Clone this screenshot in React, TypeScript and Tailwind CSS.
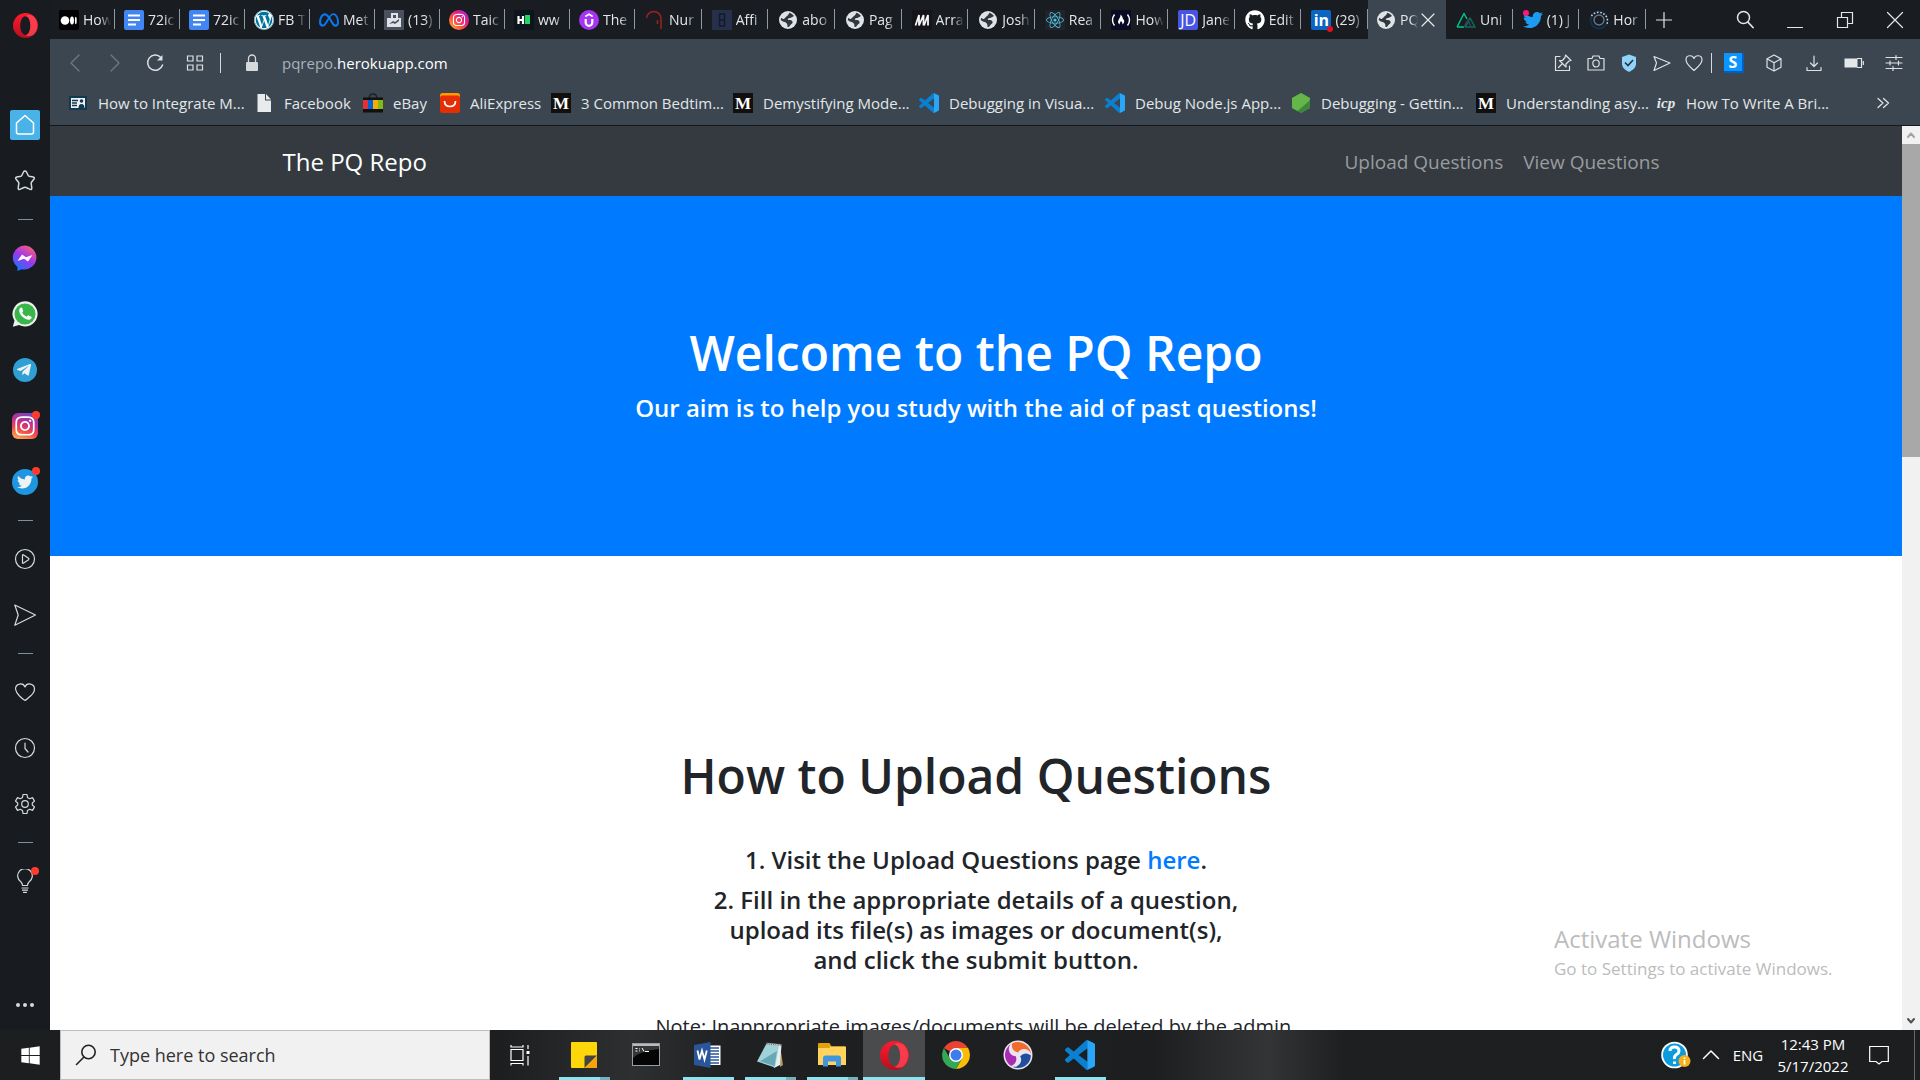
import React from "react";
import type { ReactNode } from "react";
import { FaWordpress, FaInstagram, FaGithub, FaTwitter, FaReact, FaWindows, FaTelegramPlane } from "react-icons/fa";
import { SiMeta } from "react-icons/si";

type SvgProps = { className?: string; box?: string; children: ReactNode };

function Line({ className = "size-5", box = "0 0 20 20", children }: SvgProps) {
  return (
    <svg
      className={className}
      viewBox={box}
      fill="none"
      stroke="currentColor"
      strokeWidth={1.2}
      strokeLinecap="round"
      strokeLinejoin="round"
      aria-hidden="true"
    >
      {children}
    </svg>
  );
}

function OperaO({ className, id }: { className: string; id: string }) {
  return (
    <svg className={className} viewBox="0 0 28 28" aria-hidden="true">
      <defs>
        <linearGradient id={id} x1="0" y1="0" x2="0" y2="1">
          <stop offset="0" stopColor="#ff1b2d" />
          <stop offset="1" stopColor="#b80f20" />
        </linearGradient>
      </defs>
      <path
        fillRule="evenodd"
        fill={`url(#${id})`}
        d="M14 0a14 14 0 1 0 0 28a14 14 0 1 0 0-28ZM14 3.500c3.300 0 5.400 4.600 5.400 10.500s-2.100 10.500-5.400 10.500s-5.900-4.600-5.900-10.500s2.600-10.500 5.900-10.500Z"
      />
      <path
        fill="#ff4a58"
        opacity="0.75"
        d="M14 3.500c2-1.600 5-2 8.800.2a14 14 0 0 1 0 20.600c-3.800 2.200-6.800 1.800-8.800.2c3.300 0 5.400-4.600 5.400-10.500s-2.100-10.500-5.400-10.500Z"
      />
    </svg>
  );
}

function VsCode({ className = "size-5" }: { className?: string }) {
  return (
    <svg className={className} viewBox="0 0 24 24" aria-hidden="true">
      <path
        fill="#0b7fd0"
        d="M23.150 2.587L18.210.210a1.494 1.494 0 0 0-1.705.290l-9.460 8.630-4.120-3.128a.999.999 0 0 0-1.276.057L.327 7.261A1 1 0 0 0 .326 8.740L3.899 12 .326 15.260a1 1 0 0 0 .001 1.479L1.650 17.940a.999.999 0 0 0 1.276.057l4.120-3.128 9.460 8.630a1.492 1.492 0 0 0 1.704.290l4.942-2.377A1.500 1.500 0 0 0 24 20.060V3.939a1.500 1.500 0 0 0-.850-1.352zm-5.146 14.861L10.826 12l7.178-5.448v10.896z"
      />
      <path fill="#2ba5f7" d="M18.004.150L23.150 2.587A1.500 1.500 0 0 1 24 3.939V20.060a1.500 1.500 0 0 1-.850 1.360L18.004 23.850Z" />
    </svg>
  );
}

function Tile({ className, children }: { className: string; children?: ReactNode }) {
  return (
    <span className={`flex size-5 shrink-0 items-center justify-center overflow-hidden leading-none ${className}`}>
      {children}
    </span>
  );
}

const docsIcon = (
  <Tile className="rounded-xs bg-[#4285f4]">
    <svg viewBox="0 0 20 20" className="size-5" fill="#fff" aria-hidden="true">
      <path d="M4 4.500h12v2H4zM4 9h12v2H4zM4 13.500h8v2H4z" />
    </svg>
  </Tile>
);

const globeIcon = (
  <svg viewBox="0 0 20 20" className="size-5 shrink-0" aria-hidden="true">
    <circle cx="10" cy="10" r="9" fill="#dfe3e6" />
    <path
      fill="#30373e"
      d="M11.500 2.700C13 3.200 15 4.300 16 6c-.800.200-1.200 1-2 1.200c-1-.200-1.200.800-2.200.800c-1 .500-2 .200-2 1.200c0 .800 1 .800 2.200.900c1.500.200 2.800.900 2.600 2.300c-.300 1.600-2 1.600-2.600 3c-.500 1-1.300 1.500-2.500 1.600c-.300-1.500.200-2.600-.700-3.600c-1-.900-1.800-1.500-3-1.700C4.600 11.500 3.600 10.800 2.800 10c0-.800.100-1.500.400-2.100c1 .300 1.800 1.200 2.900 1c.300-1.200 1.600-1.300 2.200-2.200c.300-1.200 1.700-.900 2-2c.200-.800.800-1.200 1.200-2Z"
    />
  </svg>
);

const mediumIcon = (
  <Tile className="bg-[#12100e] font-['Liberation_Serif',serif] text-[17px] font-bold text-white">M</Tile>
);

const instagramTile = (
  <Tile className="rounded-full bg-[linear-gradient(45deg,#ffc531,#ff543f_35%,#e01d8c_65%,#8a3bee)]">
    <FaInstagram className="size-3.5 text-white" />
  </Tile>
);

type TabInfo = { title: string; icon: ReactNode; wide?: boolean; active?: boolean };

const tabs: TabInfo[] = [
  {
    title: "How",
    icon: (
      <Tile className="rounded-xs bg-black">
        <svg viewBox="0 0 20 20" className="size-5" fill="#fff" aria-hidden="true">
          <circle cx="6" cy="10.500" r="4.300" />
          <ellipse cx="13" cy="10.500" rx="2" ry="4" />
          <ellipse cx="16.800" cy="10.500" rx="0.900" ry="3.700" />
        </svg>
      </Tile>
    ),
  },
  { title: "72ic", icon: docsIcon },
  { title: "72ic", icon: docsIcon },
  {
    title: "FB T",
    icon: (
      <Tile className="rounded-full bg-white">
        <FaWordpress className="size-5 text-[#00749c]" />
      </Tile>
    ),
  },
  { title: "Met", icon: <SiMeta className="size-5 shrink-0 text-[#0a78f0]" /> },
  {
    title: "(13)",
    icon: (
      <Tile className="bg-[#4a505e]">
        <svg viewBox="0 0 20 20" className="size-5" aria-hidden="true">
          <path fill="#dfe2e8" d="M7 3h7v5h3v9H3V8h4z" />
          <path fill="#4a505e" d="M9 5h3v3H9zM5 14l4-3 2 1 4-3v2l-4 3-2-1-4 1z" />
        </svg>
      </Tile>
    ),
  },
  { title: "Taic", icon: instagramTile },
  {
    title: "ww",
    icon: (
      <Tile className="bg-[#0e141e]">
        <svg viewBox="0 0 20 20" className="size-5" aria-hidden="true">
          <path d="M4.500 6v8M9 6v8M4.500 10H9" stroke="#fff" strokeWidth="2.200" />
          <path fill="#1fd760" d="M11 5h5v9h-5z" />
        </svg>
      </Tile>
    ),
  },
  {
    title: "The",
    icon: (
      <Tile className="rounded-full bg-[#a435f0]">
        <svg viewBox="0 0 20 20" className="size-5" fill="none" stroke="#fff" aria-hidden="true">
          <path strokeWidth="2.200" d="M6.700 9v3.500a3.300 3.300 0 0 0 6.600 0V9" />
          <path strokeWidth="1.600" d="M6.300 6.500L10 4.300l3.700 2.200" />
        </svg>
      </Tile>
    ),
  },
  {
    title: "Nur",
    wide: true,
    icon: (
      <svg viewBox="0 0 20 20" className="size-5 shrink-0" fill="none" stroke="#a32020" strokeWidth="1.500" aria-hidden="true">
        <path d="M1.500 8A7.300 7.300 0 0 1 16 8v11M12.500 10v4" />
      </svg>
    ),
  },
  {
    title: "Affi",
    wide: true,
    icon: (
      <Tile className="bg-[#26304a]">
        <svg viewBox="0 0 20 20" className="size-5" fill="none" stroke="#121a2c" strokeWidth="1.500" aria-hidden="true">
          <path d="M7.500 4h5v12h-5zM8 10h4" />
        </svg>
      </Tile>
    ),
  },
  { title: "abo", wide: true, icon: globeIcon },
  { title: "Pag", wide: true, icon: globeIcon },
  {
    title: "Arra",
    wide: true,
    icon: (
      <Tile className="bg-[#15141a]">
        <svg viewBox="0 0 20 20" className="size-5" fill="none" stroke="#f5f5f5" strokeWidth="1.800" aria-hidden="true">
          <path d="M3.500 15.500L7 5v10.500L11.500 5v10.500M12 15.500L16 5v10.500" />
        </svg>
      </Tile>
    ),
  },
  { title: "Josh", wide: true, icon: globeIcon },
  {
    title: "Rea",
    wide: true,
    icon: (
      <Tile className="bg-[#20232a]">
        <FaReact className="size-[18px] text-[#53c1de]" />
      </Tile>
    ),
  },
  {
    title: "How",
    wide: true,
    icon: (
      <Tile className="bg-[#0a0a23]">
        <svg viewBox="0 0 20 20" className="size-5" fill="none" stroke="#fff" strokeWidth="1.400" aria-hidden="true">
          <path d="M3.500 4.500q-4 5.500 0 11M16.500 4.500q4 5.500 0 11" />
          <path fill="#fff" stroke="none" d="M9.500 4.500c3 2.500 1.500 4 3.500 5.500c.700 2-.300 4-1.800 4.500c.800-1.500-.500-2.500-1.200-3.500c-.500 1.200-1.700 2-1.200 3.500c-2-1-2.300-3-1-5c1-1.500 1.700-3 1.700-5Z" />
        </svg>
      </Tile>
    ),
  },
  { title: "Jane", wide: true, icon: <Tile className="rounded-xs bg-[#4755e0] text-[16px] text-white">JD</Tile> },
  { title: "Edit", wide: true, icon: <FaGithub className="size-5 shrink-0 text-white" /> },
  {
    title: "(29)",
    wide: true,
    icon: (
      <span className="relative shrink-0">
        <Tile className="rounded-xs bg-[#0a66c2] text-[16px] font-bold text-white">in</Tile>
        <span className="absolute -right-0.5 -bottom-0.5 size-1.5 rounded-full bg-[#e0101c]" />
      </span>
    ),
  },
  { title: "PQ", active: true, icon: globeIcon },
  {
    title: "Uni",
    wide: true,
    icon: (
      <svg viewBox="0 0 20 20" className="size-5 shrink-0" fill="none" strokeWidth="1.500" strokeLinejoin="round" aria-hidden="true">
        <path stroke="#0e6f55" d="M9.500 17L14 8l5 9z" />
        <path stroke="#00c58e" d="M1 17L8 3.500l3 5.500M1 17h7" />
        <path stroke="#2f495e" d="M8 17l4-7 3 7" />
      </svg>
    ),
  },
  {
    title: "(1) J",
    wide: true,
    icon: (
      <span className="relative shrink-0">
        <FaTwitter className="size-5 text-[#1d9bf0]" />
        <span className="absolute top-0 left-0 size-1.5 rounded-full bg-[#f91880]" />
      </span>
    ),
  },
  {
    title: "Hor",
    wide: true,
    icon: (
      <svg viewBox="0 0 20 20" className="size-5 shrink-0" fill="none" aria-hidden="true">
        <circle cx="10" cy="10" r="8.500" stroke="#123150" strokeWidth="2" />
        <path d="M2.500 6A8.800 8.800 0 0 1 18 14" stroke="#d5dae0" strokeWidth="1.500" strokeDasharray="1.500 1.800" />
        <circle cx="10" cy="10" r="5" stroke="#65758a" strokeWidth="1.400" />
      </svg>
    ),
  },
];

function Tab({ tab }: { tab: TabInfo }) {
  const shape = tab.active
    ? "w-[78px] shrink-0 bg-[#3b4651] pl-2 pr-2"
    : tab.wide
      ? "min-w-0 flex-1 pl-2.5 pr-1"
      : "w-[65px] shrink-0 pl-[9px] pr-1";
  return (
    <div className={`relative flex items-center ${shape}`}>
      <button type="button" className="flex min-w-0 flex-1 items-center gap-1 text-left">
        {tab.icon}
        <span className="min-w-0 flex-1 overflow-hidden mask-r-from-60% text-[14px] whitespace-nowrap text-[#e4e6e8]">
          {tab.title}
        </span>
      </button>
      {tab.active ? (
        <button type="button" aria-label="Close tab" className="text-[#e5e8ea]">
          <Line className="size-5">
            <path d="M4 4l12 12M16 4L4 16" />
          </Line>
        </button>
      ) : (
        <span className="absolute top-[9px] right-0 h-5 w-px bg-[#8f9aa5]" />
      )}
    </div>
  );
}

function WindowButton({ label, children }: { label: string; children: ReactNode }) {
  return (
    <button type="button" aria-label={label} className="flex w-[50px] items-center justify-center text-[#e4e7e9]">
      {children}
    </button>
  );
}

function TabStrip() {
  return (
    <div className="flex h-[39px] shrink-0 bg-[#191c20]">
      <div className="flex min-w-0 flex-1">
        {tabs.map((tab, i) => (
          <Tab key={i} tab={tab} />
        ))}
      </div>
      <div className="flex shrink-0">
        <button type="button" aria-label="New tab" className="mr-[38px] flex w-9 items-center justify-center text-[#e4e7e9]">
          <Line>
            <path d="M10 2.500v15M2.500 10h15" />
          </Line>
        </button>
        <WindowButton label="Search tabs">
          <Line>
            <circle cx="8.500" cy="7.500" r="6" strokeWidth={1.500} />
            <path d="M12.800 12l5.200 5.500" strokeWidth={1.800} />
          </Line>
        </WindowButton>
        <WindowButton label="Minimize">
          <Line>
            <path d="M2.500 17.500h15" />
          </Line>
        </WindowButton>
        <WindowButton label="Restore">
          <Line>
            <path d="M2.500 7.500h10v10h-10zM6.500 7V2.500h11v11H13" strokeLinejoin="miter" />
          </Line>
        </WindowButton>
        <WindowButton label="Close">
          <Line>
            <path d="M2.500 2.500l15 15M17.500 2.500l-15 15" />
          </Line>
        </WindowButton>
      </div>
    </div>
  );
}

function ToolButton({ label, className, children }: { label: string; className: string; children: ReactNode }) {
  return (
    <button type="button" aria-label={label} className={`flex items-center justify-center ${className}`}>
      {children}
    </button>
  );
}

function AddressBar() {
  return (
    <div className="flex h-[46px] shrink-0 items-center pt-0.5 pl-[5px] text-[#dde1e4]">
      <ToolButton label="Back" className="w-10 text-[#6f7a84]">
        <Line>
          <path d="M14 2l-8 8 8 8" />
        </Line>
      </ToolButton>
      <ToolButton label="Forward" className="w-10 text-[#6f7a84]">
        <Line>
          <path d="M6 2l8 8-8 8" />
        </Line>
      </ToolButton>
      <ToolButton label="Reload" className="w-10">
        <Line>
          <path d="M15.800 4.500A7.600 7.600 0 1 0 17.500 12" strokeWidth={1.500} />
          <path d="M17.500 2v5.500H12z" fill="currentColor" stroke="none" />
        </Line>
      </ToolButton>
      <ToolButton label="Speed dials" className="w-10">
        <Line>
          <path d="M2.500 3h5.500v5H2.500zM12 3h5.500v5H12zM2.500 12h5.500v5H2.500zM12 12h5.500v5H12z" strokeLinejoin="miter" />
        </Line>
      </ToolButton>
      <span className="ml-[5px] h-5 w-px bg-[#d5d9dc]" />
      <ToolButton label="Site information" className="w-[61px]">
        <svg viewBox="0 0 20 20" className="size-5" aria-hidden="true">
          <rect x="4" y="9" width="12" height="9" rx="1" fill="#d5d9dc" />
          <path d="M6.500 9V5.500a3.500 3.500 0 0 1 7 0V9" fill="none" stroke="#d5d9dc" strokeWidth="1.300" />
        </svg>
      </ToolButton>
      <button type="button" className="flex-1 cursor-text text-left text-[15px] text-[#a9b2ba]">
        pqrepo.<span className="text-white">herokuapp.com</span>
      </button>
      <div className="flex shrink-0 items-center">
        <ToolButton label="Edit page" className="w-[33px]">
          <Line>
            <path d="M7 3.500H2.500v14h14V13M12.500 2l5.500 5.500-2 .5-3 3v3L6.500 7.500h3l2.500-3zM9.500 10.500L5.500 14.500" />
          </Line>
        </ToolButton>
        <ToolButton label="Snapshot" className="w-[33px]">
          <Line>
            <path d="M2 5.500h4l1-2.500h6l1 2.500h4v11.500H2z" />
            <ellipse cx="10" cy="10.500" rx="3.200" ry="3.500" />
          </Line>
        </ToolButton>
        <ToolButton label="Privacy protection" className="w-[33px]">
          <svg viewBox="0 0 20 20" className="size-5" aria-hidden="true">
            <path d="M10 1.500l7 2.500v7c0 3.500-3.500 6.500-7 8-3.500-1.500-7-4.500-7-8V4z" fill="#8fd3fb" />
            <path d="M6 9.500l3 3 5-5.500" fill="none" stroke="#26323c" strokeWidth="1.600" />
          </svg>
        </ToolButton>
        <ToolButton label="Send to My Flow" className="w-[33px]">
          <Line>
            <path d="M2 3.500L18 10 2 17.500 4.500 10z" />
          </Line>
        </ToolButton>
        <ToolButton label="Add to bookmarks" className="w-[31px]">
          <Line>
            <path d="M10 17.500C6 14 2 11 2 6.800C2 1.800 8.500 1.500 10 5.500C11.500 1.500 18 1.800 18 6.800C18 11 14 14 10 17.500z" />
          </Line>
        </ToolButton>
        <span className="mx-[2px] h-5 w-px bg-[#d5d9dc]" />
        <ToolButton label="Extension" className="w-10">
          <span className="flex size-5 items-center justify-center border-r-2 border-b-2 border-[#005fc0] bg-[#0b95ff] text-[16px] leading-none font-bold text-white">
            S
          </span>
        </ToolButton>
        <ToolButton label="Extensions" className="w-10">
          <Line>
            <path d="M10 2l7 3.800v8.400L10 18l-7-3.800V5.800zM3 5.800l7 4 7-4M10 9.800V18" />
          </Line>
        </ToolButton>
        <ToolButton label="Downloads" className="w-10">
          <Line>
            <path d="M10 3v10M6.500 10l3.500 3.500 3.500-3.500M3 14.500v3h14v-3" />
          </Line>
        </ToolButton>
        <ToolButton label="Battery saver" className="w-10">
          <svg viewBox="0 0 20 20" className="size-5" aria-hidden="true">
            <path d="M.5 5.500h13v9H.5z" fill="#e4e8ea" />
            <path d="M13 5.500h4.500v9H13M19.300 8v4" fill="none" stroke="#e4e8ea" strokeWidth="1.200" />
          </svg>
        </ToolButton>
        <ToolButton label="Easy setup" className="mr-1.5 w-10">
          <Line>
            <path d="M2 4.500h16M2 10h16M2 15.500h16M12 2.500v4M6 8v4M14.500 8v4M9 13.500v4" />
          </Line>
        </ToolButton>
      </div>
    </div>
  );
}

type Bookmark = { label: string; icon: ReactNode; width: string };

const bookmarks: Bookmark[] = [
  {
    label: "How to Integrate M...",
    width: "w-[186px]",
    icon: (
      <svg viewBox="0 0 20 20" className="size-5 shrink-0" aria-hidden="true">
        <rect x="1" y="3" width="18" height="14" fill="#12394f" />
        <path fill="#eef2f4" d="M3 5h14v10H3z" />
        <path d="M4 7.500h6M4 10h5M4 12.500h5" stroke="#12394f" strokeWidth="1.300" />
        <circle cx="13.500" cy="8" r="1.800" fill="#12394f" />
        <path fill="#12394f" d="M10.500 15q0-4 3-4t3 4z" />
      </svg>
    ),
  },
  {
    label: "Facebook",
    width: "w-[109px]",
    icon: (
      <svg viewBox="0 0 20 20" className="size-5 shrink-0" aria-hidden="true">
        <path fill="#e8ebed" d="M3.500 1h7.500v6.500h6V19H3.500z" />
        <path fill="#e8ebed" d="M12 1l5 5.500h-5z" />
      </svg>
    ),
  },
  {
    label: "eBay",
    width: "w-[77px]",
    icon: (
      <svg viewBox="0 0 20 20" className="size-5 shrink-0" aria-hidden="true">
        <path d="M6 6q0-5 4-5t4 5" fill="none" stroke="#1b2025" strokeWidth="1.300" />
        <path fill="#111" d="M0 4.500h20V7H0zM0 16h20v3.500H0z" />
        <path fill="#e43137" d="M0 7h5v9H0z" />
        <path fill="#0064d2" d="M5 7h5v9H5z" />
        <path fill="#f5af02" d="M10 7h5v9h-5z" />
        <path fill="#86b817" d="M15 7h5v9h-5z" />
      </svg>
    ),
  },
  {
    label: "AliExpress",
    width: "w-[111px]",
    icon: (
      <svg viewBox="0 0 20 20" className="size-5 shrink-0" aria-hidden="true">
        <rect width="20" height="12" rx="2.500" fill="#ff9a00" />
        <rect y="2.500" width="20" height="17.500" rx="2.500" fill="#e62e04" />
        <path d="M4.500 8q0 5.500 5.500 5.500T15.500 8" fill="none" stroke="#fff" strokeWidth="1.700" />
      </svg>
    ),
  },
  { label: "3 Common Bedtim...", width: "w-[182px]", icon: mediumIcon },
  { label: "Demystifying Mode...", width: "w-[186px]", icon: mediumIcon },
  { label: "Debugging in Visua...", width: "w-[186px]", icon: <VsCode className="size-5 shrink-0" /> },
  { label: "Debug Node.js App...", width: "w-[186px]", icon: <VsCode className="size-5 shrink-0" /> },
  {
    label: "Debugging - Gettin...",
    width: "w-[185px]",
    icon: (
      <svg viewBox="0 0 20 20" className="size-5 shrink-0" aria-hidden="true">
        <path fill="#539e43" d="M10 0l9 5v10l-9 5-9-5V5z" />
        <path fill="#6cc04a" d="M10 0l9 5v3L6 17.800 1 15V5z" opacity="0.700" />
        <path fill="#3e863d" d="M19 7v8l-9 5-3-1.700z" />
      </svg>
    ),
  },
  { label: "Understanding asy...", width: "w-[180px]", icon: mediumIcon },
  {
    label: "How To Write A Bri...",
    width: "w-[186px]",
    icon: (
      <span className="w-5 shrink-0 text-center font-['Liberation_Serif',serif] text-[15px] font-bold italic">icp</span>
    ),
  },
];

function BookmarksBar() {
  return (
    <nav aria-label="Bookmarks" className="flex h-10 shrink-0 items-center pb-1 pl-[18px] text-[#e3e6e8]">
      {bookmarks.map((b) => (
        <a key={b.label} href="#" className={`flex shrink-0 items-center gap-2.5 text-[15px] whitespace-nowrap ${b.width}`}>
          {b.icon}
          {b.label}
        </a>
      ))}
      <button type="button" aria-label="More bookmarks" className="mr-[27px] ml-auto">
        <Line>
          <path d="M5 5.500l5 4.500-5 4.500M10.500 5.500l5 4.500-5 4.500" />
        </Line>
      </button>
    </nav>
  );
}

function Dash() {
  return (
    <div className="flex h-[21px] shrink-0 items-center justify-center">
      <span className="h-px w-[15px] bg-[#7f8f9b]" />
    </div>
  );
}

function SideButton({ label, dot, children }: { label: string; dot?: boolean; children: ReactNode }) {
  return (
    <button type="button" aria-label={label} className="flex h-14 w-full shrink-0 items-center justify-center text-[#d5dadd]">
      <span className="relative">
        {children}
        {dot && <span className="absolute -top-0.5 -right-0.5 size-2 rounded-full bg-[#ff3b30]" />}
      </span>
    </button>
  );
}

function Sidebar() {
  return (
    <aside className="flex w-[50px] shrink-0 flex-col bg-[#181c20]">
      <button type="button" aria-label="Opera menu" className="flex h-[97px] shrink-0 justify-center pt-[13px]">
        <OperaO className="size-[25px]" id="opera-menu" />
      </button>
      <SideButton label="Speed Dial">
        <span className="flex size-[30px] items-center justify-center rounded-xs bg-[#48b2e9] text-white">
          <Line className="size-6" box="0 0 24 24">
            <path d="M12 2.500l8.500 7.500v9q0 2-2 2h-13q-2 0-2-2v-9z" strokeWidth={1.500} />
          </Line>
        </span>
      </SideButton>
      <SideButton label="Pinboards">
        <Line className="size-6" box="0 0 24 24">
          <path
            d="M12 2q1 0 1.500 1l1.700 3.500q.3.600 1 .8l4 .7q1.800.500.800 2l-2.500 3.200q-.4.500-.300 1.200l.600 4.800q0 1.700-1.600 1.200L13 18.500q-1-.4-2 0l-4.200 1.900q-1.600.500-1.600-1.200l.6-4.800q.1-.7-.3-1.200L3 10q-1-1.500.8-2l4-.7q.7-.2 1-.8L10.500 3q.5-1 1.500-1z"
            strokeWidth={1.500}
          />
        </Line>
      </SideButton>
      <Dash />
      <SideButton label="Messenger">
        <svg viewBox="0 0 26 26" className="size-[26px]" aria-hidden="true">
          <defs>
            <linearGradient id="messenger" x1="0.200" y1="1" x2="0.800" y2="0">
              <stop offset="0" stopColor="#0a7cff" />
              <stop offset="0.500" stopColor="#9b36f0" />
              <stop offset="1" stopColor="#ff6070" />
            </linearGradient>
          </defs>
          <path fill="url(#messenger)" d="M13 .5a12.300 12 0 1 1-3.500 23.700L5.500 26v-4A12 12 0 0 1 13 .5z" />
          <path fill="#fff" d="M5.500 16l4.500-6.500 4 2.800L20.500 10 16 16.500l-4-2.800z" />
        </svg>
      </SideButton>
      <SideButton label="WhatsApp">
        <svg viewBox="0 0 26 26" className="size-[26px]" aria-hidden="true">
          <path fill="#eef0ef" d="M13 .3a12.600 12.600 0 1 1-6 23.700L.8 25.700l1.700-6A12.600 12.600 0 0 1 13 .3z" />
          <circle cx="13" cy="13" r="10.500" fill="#38b64a" />
          <path fill="#fff" d="M9 6.500c-3 1.500-2 6 1.500 9.300s7.800 4 9 1.200c.3-.8 0-1.300-.5-1.500l-2.300-1.100c-.5-.2-.9 0-1.200.4l-.8 1q-3-1-4.500-4l.8-1c.2-.4.300-.7.100-1.100L10.200 7q-.4-.8-1.200-.5z" />
        </svg>
      </SideButton>
      <SideButton label="Telegram">
        <span className="flex size-6 items-center justify-center rounded-full bg-[#2f9fd4]">
          <FaTelegramPlane className="mr-0.5 size-4 text-[#eef3f6]" />
        </span>
      </SideButton>
      <SideButton label="Instagram" dot>
        <span className="flex size-[26px] items-center justify-center rounded-md bg-[linear-gradient(20deg,#fdc04f,#ee4b4b_35%,#c0308f_60%,#5b4cd0)]">
          <FaInstagram className="size-[22px] text-white" />
        </span>
      </SideButton>
      <SideButton label="Twitter" dot>
        <span className="flex size-[26px] items-center justify-center rounded-full bg-[#1e96e0]">
          <FaTwitter className="size-4 text-[#eef3f6]" />
        </span>
      </SideButton>
      <Dash />
      <SideButton label="Player">
        <Line className="size-[22px]" box="0 0 22 22">
          <circle cx="11" cy="11" r="9.500" />
          <path d="M8.500 7.300q0-.8.800-.5l5.200 3.500q.8.700 0 1.400l-5.200 3.500q-.8.300-.8-.5z" />
        </Line>
      </SideButton>
      <SideButton label="My Flow">
        <Line className="size-[22px]" box="0 0 22 22">
          <path d="M.8 1L21.500 11 .8 21.200l3.400-10.200z" />
        </Line>
      </SideButton>
      <Dash />
      <SideButton label="Bookmarks">
        <Line className="size-[22px]" box="0 0 22 22">
          <path d="M11 19.500q-2-1-5.500-4.500T1.500 8C1.500 2.500 9 1 11 6c2-5 9.500-3.500 9.500 2q0 3.500-4 7T11 19.500z" />
        </Line>
      </SideButton>
      <SideButton label="History">
        <Line className="size-[22px]" box="0 0 22 22">
          <circle cx="11" cy="11" r="9.500" />
          <path d="M11 6v5.500l3 3.500" />
        </Line>
      </SideButton>
      <SideButton label="Settings">
        <Line className="size-[22px]" box="0 0 22 22">
          <path d="M9 1.500h4l.5 3 2.200 1.200 2.800-1.100 2 3.500-2.200 1.900v2l2.200 1.900-2 3.500-2.800-1.100-2.200 1.200-.5 3H9l-.5-3-2.200-1.200-2.800 1.100-2-3.500 2.200-1.900v-2L1.500 8.100l2-3.500 2.800 1.100 2.200-1.200z" />
          <circle cx="11" cy="11" r="3.300" />
        </Line>
      </SideButton>
      <Dash />
      <SideButton label="Tips" dot>
        <Line className="size-6" box="0 0 24 24">
          <path d="M9.500 16.500q0-2-1.500-3.500a7.300 7.300 0 1 1 8 0q-1.500 1.500-1.500 3.500zM9 19h6M9.500 21.200h5M10.500 23.300h3" />
        </Line>
      </SideButton>
      <button type="button" aria-label="Sidebar setup" className="mt-auto flex h-[50px] items-center justify-center gap-[3px]">
        <span className="size-1 rounded-full bg-[#d5dadd]" />
        <span className="size-1 rounded-full bg-[#d5dadd]" />
        <span className="size-1 rounded-full bg-[#d5dadd]" />
      </button>
    </aside>
  );
}

function WebPage() {
  return (
    <div className="relative flex min-h-0 flex-1 border-t border-[#15181b] bg-white text-[#212529]">
      <div className="min-w-0 flex-1 overflow-hidden">
        <header className="h-[70px] bg-[#343a40] pt-0.5">
          <div className="mx-auto flex h-full max-w-[1425px] items-center justify-between px-[19px]">
            <a href="#" className="text-[24px] text-white">
              The PQ Repo
            </a>
            <nav aria-label="Site" className="flex text-[19px] text-[#999c9f]">
              <a href="#" className="px-2.5">
                Upload Questions
              </a>
              <a href="#" className="px-2.5">
                View Questions
              </a>
            </nav>
          </div>
        </header>
        <section className="bg-[#007bff] pt-[127px] pb-[123px] text-center font-semibold text-white">
          <h1 className="mb-2.5 text-[48px] leading-[60px]">Welcome to the PQ Repo</h1>
          <h2 className="mb-2.5 text-[24px] leading-[30px]">Our aim is to help you study with the aid of past questions!</h2>
        </section>
        <section className="pt-[190px] text-center">
          <h2 className="mb-[39px] text-[48px] leading-[60px] font-semibold">How to Upload Questions</h2>
          <div className="text-[24px] leading-[30px] font-semibold">
            <p className="mb-2.5">
              1. Visit the Upload Questions page{" "}
              <a href="#" className="text-[#007bff]">
                here
              </a>
              .
            </p>
            <p>
              2. Fill in the appropriate details of a question,
              <br />
              upload its file(s) as images or document(s),
              <br />
              and click the submit button.
            </p>
          </div>
          <p className="mt-[37px] text-[20px] leading-[30px]">Note: Inappropriate images/documents will be deleted by the admin.</p>
        </section>
      </div>
      <div className="flex w-[18px] shrink-0 flex-col bg-[#f1f1f1]">
        <span className="flex h-[18px] items-center justify-center text-[#a3a3a3]">
          <Line className="size-2.5" box="0 0 10 10">
            <path d="M2 7l3-3.500L8 7" strokeWidth={2} />
          </Line>
        </span>
        <span className="h-[313px] bg-[#a8a8a8]" />
        <span className="mt-auto flex h-[18px] items-center justify-center text-[#505050]">
          <Line className="size-2.5" box="0 0 10 10">
            <path d="M2 3l3 3.500L8 3" strokeWidth={2} />
          </Line>
        </span>
      </div>
      <div className="absolute right-[82px] bottom-12 w-[284px] whitespace-nowrap text-[#bcbcbc]">
        <p className="text-[24px] leading-[34px]">Activate Windows</p>
        <p className="text-[17px] leading-[26px]">Go to Settings to activate Windows.</p>
      </div>
    </div>
  );
}

type TaskMark = "none" | "one" | "many" | "full";

function TaskItem({ label, mark, children }: { label: string; mark: TaskMark; children: ReactNode }) {
  const active = mark === "full";
  return (
    <button
      type="button"
      aria-label={label}
      className={`relative flex h-full w-[62px] items-center justify-center ${active ? "bg-[#4a4b4d]" : ""}`}
    >
      {children}
      {mark === "one" && <span className="absolute bottom-0 left-1.5 h-[3px] w-[51px] bg-[#8ae4f2]" />}
      {mark === "many" && (
        <span className="absolute bottom-0 left-1.5 flex h-[3px] w-[51px]">
          <span className="flex-1 bg-[#8ae4f2]" />
          <span className="w-2.5 bg-[#74b3bd]" />
        </span>
      )}
      {active && <span className="absolute inset-x-0 bottom-0 h-[3px] bg-[#8ae4f2]" />}
    </button>
  );
}

const swirlBlade = "M-6 -11.500A13 13 0 0 1 13 -1Q11 -6 6 -6Q2 -6 0 -2.500Q-7 -4 -6 -11.500Z";

function Taskbar() {
  return (
    <footer className="flex h-[50px] shrink-0 items-stretch bg-[linear-gradient(90deg,#1d1e20_0%,#1d1e20_26%,#2e2f31_33%,#1f2022_38%,#1d1e20_60%,#333436_66%,#1e1f21_70%,#1d1e20_100%)] text-white">
      <button type="button" aria-label="Start" className="flex w-[60px] items-center justify-center">
        <FaWindows className="size-[21px]" />
      </button>
      <label className="flex w-[430px] items-center border border-[#bdbdbd] bg-[#f1f1f1] pl-3.5 text-[#222]">
        <Line className="size-[22px]" box="0 0 22 22">
          <circle cx="13.500" cy="8" r="6.700" strokeWidth={1.600} />
          <path d="M9 13L1.500 20.500" strokeWidth={1.600} />
        </Line>
        <input
          type="text"
          aria-label="Search Windows"
          placeholder="Type here to search"
          className="ml-[13px] min-w-0 flex-1 bg-transparent text-[18px] outline-none placeholder:text-[#333]"
        />
      </label>
      <button type="button" aria-label="Task view" className="mr-[3px] flex w-[60px] items-center justify-center">
        <Line className="size-[22px]" box="0 0 22 22">
          <path d="M2 5.500h12v11H2zM2 1v2h12V1M2 21.500v-2h12v2M19 1v4M19 12v9.500" strokeLinejoin="miter" strokeLinecap="butt" />
          <path d="M17.500 7h3v3h-3z" fill="currentColor" stroke="none" />
        </Line>
      </button>
      <TaskItem label="Sticky Notes" mark="many">
        <svg viewBox="0 0 26 26" className="size-[26px]" aria-hidden="true">
          <path fill="#ffd60a" d="M0 1q0-1 1-1h24q1 0 1 1v24q0 1-1 1H1q-1 0-1-1z" />
          <path fill="#444" d="M13.500 26V15q0-1.500 1.500-1.500h11z" />
          <path fill="#f2a60a" d="M13.500 26L26 13.500V26z" />
        </svg>
      </TaskItem>
      <TaskItem label="Command Prompt" mark="none">
        <svg viewBox="0 0 28 24" className="h-6 w-7" aria-hidden="true">
          <rect x="0.500" y="0.500" width="27" height="22" fill="#050505" stroke="#9a9da0" />
          <path fill="#b8babd" d="M1 1h26v2H1z" />
          <path fill="#55575a" d="M1 3h26v3Q8 8 1 15z" opacity="0.600" />
          <path d="M3.500 5.500h2M3.500 8h2M7.500 5.500v.8M7.500 7.500v.8M10 5l2 3.500M13 8.500h4" stroke="#fff" strokeWidth="1" />
        </svg>
      </TaskItem>
      <TaskItem label="Word" mark="one">
        <svg viewBox="0 0 28 26" className="h-[26px] w-7" aria-hidden="true">
          <path fill="#fff" d="M14 3.500h12.500v19.500H14z" />
          <path d="M16 6h9M16 9h9M16 12h9M16 15h9M16 18h9M16 21h9" stroke="#2a5699" strokeWidth="1.500" />
          <path fill="#2a5699" d="M0 3L16.500 0v26L0 23z" />
          <path d="M3.500 8.500l2 9 2.500-9 2.500 9 2.300-9" fill="none" stroke="#fff" strokeWidth="1.800" />
        </svg>
      </TaskItem>
      <TaskItem label="Notepad" mark="many">
        <svg viewBox="0 0 28 28" className="size-7" aria-hidden="true">
          <path fill="#b49a60" d="M24 4l3 20-3 2z" />
          <path fill="#e8eeee" d="M11.500 2L25.500 3.500 24 24 18 27z" />
          <path fill="#9fd2d9" d="M10.500 2.500l12.500 2L19 26.500 1 20.500z" />
          <path fill="#4f97a5" d="M21 10l-2.500 15L4 20.300z" opacity="0.700" />
          <path d="M10.500 2.500l15 1.500" stroke="#777" strokeWidth="2" strokeDasharray="1.200 1" />
        </svg>
      </TaskItem>
      <TaskItem label="File Explorer" mark="many">
        <svg viewBox="0 0 28 24" className="h-6 w-7" aria-hidden="true">
          <path fill="#e0a10c" d="M0 1q0-1 1-1h10.500l2 3.500H27q1 0 1 1V12H0z" />
          <path fill="#ffd35c" d="M0 5h11l2-1.500h14q1 0 1 1V22H0z" />
          <path fill="#3f96dd" d="M5 23.500v-8.500q0-2.500 2.500-2.500h13q2.500 0 2.500 2.500v8.500h-5V18.500h-8v5z" />
        </svg>
      </TaskItem>
      <TaskItem label="Opera" mark="full">
        <OperaO className="size-[29px]" id="opera-task" />
      </TaskItem>
      <TaskItem label="Chrome" mark="none">
        <svg viewBox="0 0 28 28" className="size-7" aria-hidden="true">
          <path fill="#ea4335" d="M14 14L1.900 7a14 14 0 0 1 24.200 0z" />
          <path fill="#fbbc05" d="M14 7h12.100A14 14 0 0 1 14 28l6-10.500z" />
          <path fill="#34a853" d="M1.900 7L8 17.500l12 0L14 28A14 14 0 0 1 1.900 7z" />
          <circle cx="14" cy="14" r="7" fill="#fff" />
          <circle cx="14" cy="14" r="5.500" fill="#3b7ded" />
        </svg>
      </TaskItem>
      <TaskItem label="Browser" mark="none">
        <svg viewBox="-15 -15 30 30" className="size-[30px]" aria-hidden="true">
          <circle r="14.500" fill="#e9e4ee" />
          <path fill="#f26b2a" d={swirlBlade} />
          <path fill="#1f4f9e" d={swirlBlade} transform="rotate(120)" />
          <path fill="#a72bb5" d={swirlBlade} transform="rotate(240)" />
        </svg>
      </TaskItem>
      <TaskItem label="Visual Studio Code" mark="one">
        <VsCode className="size-[30px]" />
      </TaskItem>
      <div className="ml-auto flex items-center text-[15px]">
        <button type="button" aria-label="Help" className="flex w-9 items-center justify-center">
          <svg viewBox="0 0 30 28" className="h-7 w-[30px]" aria-hidden="true">
            <circle cx="13.500" cy="14" r="13.300" fill="#fff" />
            <circle cx="13.500" cy="14" r="11.500" fill="#0c9bdc" />
            <path d="M9 10q0-4 4.500-4T18 10q0 2-2.500 3.500T13.500 18M13.500 20.500v2.500" fill="none" stroke="#fff" strokeWidth="3" />
            <circle cx="23.500" cy="20" r="6" fill="#f6b01e" />
            <path d="M23.500 16.500v1.500M23.500 19v4.500" stroke="#fff" strokeWidth="1.800" />
          </svg>
        </button>
        <button type="button" aria-label="Show hidden icons" className="flex w-[34px] items-center justify-center">
          <Line>
            <path d="M2.500 13.500L10 6l7.500 7.500" strokeWidth={1.500} />
          </Line>
        </button>
        <button type="button" className="w-10 text-center">
          ENG
        </button>
        <button type="button" className="w-[86px] pl-1 text-center leading-[22px] whitespace-nowrap">
          12:43 PM
          <br />
          5/17/2022
        </button>
        <button type="button" aria-label="Notifications" className="mr-[21px] ml-[11px] flex w-7 items-center justify-center">
          <Line className="size-5" box="0 0 20 20">
            <path d="M.700 1.500h18.600v15H13l-3 2.500-3-2.500H.7z" strokeLinejoin="miter" />
          </Line>
        </button>
        <span className="mr-[5px] h-full w-px bg-[#66686a]" />
      </div>
    </footer>
  );
}

export default function App() {
  return (
    <div className="flex h-screen flex-col overflow-hidden font-['Open_Sans','Noto_Sans',sans-serif]">
      <div className="flex min-h-0 flex-1">
        <Sidebar />
        <main className="flex min-w-0 flex-1 flex-col bg-[#3b4651]">
          <TabStrip />
          <AddressBar />
          <BookmarksBar />
          <WebPage />
        </main>
      </div>
      <Taskbar />
    </div>
  );
}
